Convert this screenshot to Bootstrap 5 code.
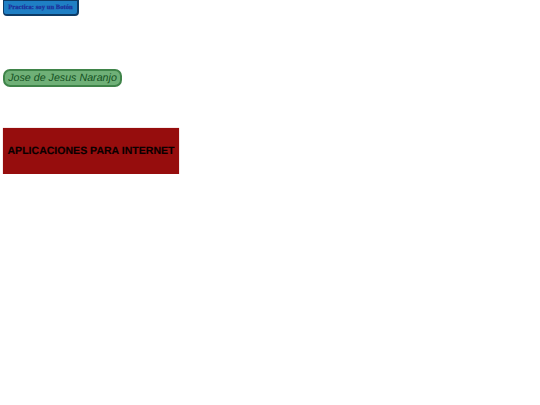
<!DOCTYPE html>
<html lang="es">
<head>
<meta charset="utf-8">
<title>Practica</title>
<link href="https://cdn.jsdelivr.net/npm/bootstrap@5.3.0/dist/css/bootstrap.min.css" rel="stylesheet">
<style>
html,body{background:#fff;text-rendering:geometricPrecision;}
.page-wrap{padding:0 0 0 3px;}
.btn-soy{width:76px;height:16px;background:#1f7fc4;border:1px solid #0d3b66;border-bottom-width:2px;border-right-width:2px;border-radius:0 0 4px 4px;color:#1d2f9c;font:700 6.6px/14px "Liberation Serif",serif;letter-spacing:.03px;-webkit-text-stroke:.25px #1d2f9c;}
.name-pill{width:119px;height:18px;margin-top:53px;background:#6fb077;border:2px solid #3f8449;border-radius:7px;color:#14501f;font:italic 10.7px/15px "Liberation Sans",sans-serif;}
.title-box{width:176px;height:46px;margin-top:41px;background:#960d0d;color:#0a0000;font:700 10.55px/47px "Liberation Sans",sans-serif;-webkit-text-stroke:.15px #0a0000;box-shadow:0 0 1px #c98a8a;}
</style>
</head>
<body>
<div class="page-wrap d-flex flex-column align-items-start">
  <div class="btn-soy d-flex align-items-center justify-content-center text-nowrap">Practica: soy un Botón</div>
  <div class="name-pill d-flex align-items-center justify-content-center text-nowrap">Jose de Jesus Naranjo</div>
  <div class="title-box text-center text-nowrap">APLICACIONES PARA INTERNET</div>
</div>
<script src="https://cdn.jsdelivr.net/npm/bootstrap@5.3.0/dist/js/bootstrap.bundle.min.js"></script>
</body>
</html>
